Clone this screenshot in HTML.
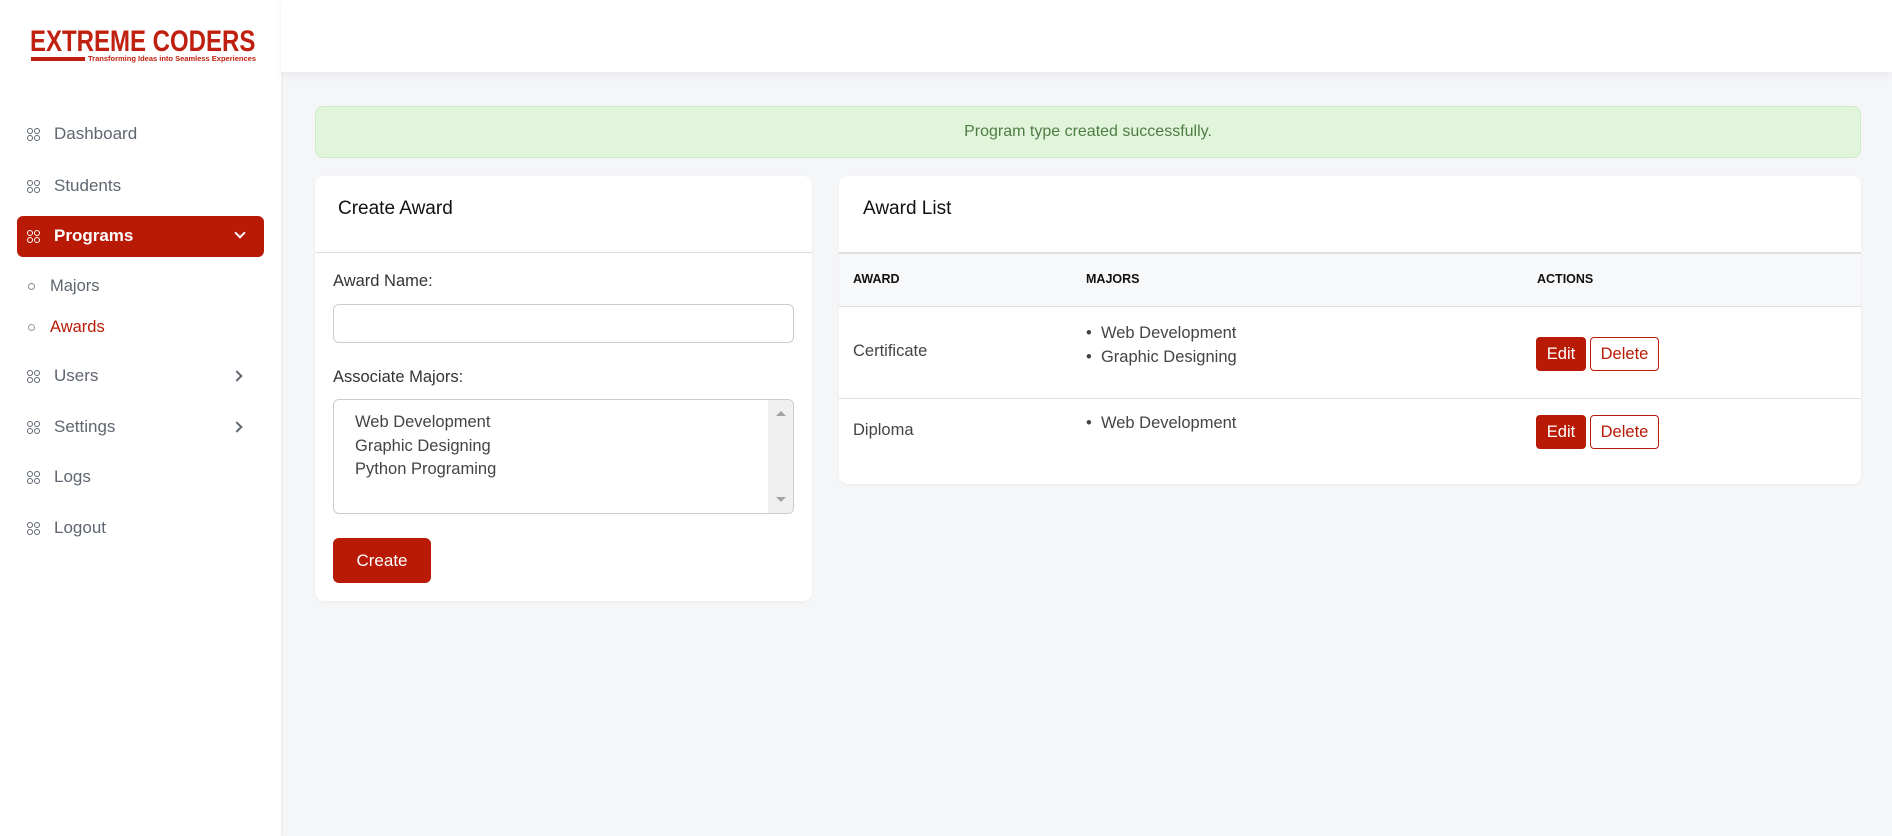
<!DOCTYPE html>
<html><head><meta charset="utf-8"><style>
*{box-sizing:border-box;margin:0;padding:0}
body{width:1892px;height:836px;overflow:hidden;background:#f5f6f8;font-family:"Liberation Sans",sans-serif;position:relative;color:#333}
.side{position:absolute;left:0;top:0;width:281px;height:836px;background:#fff;box-shadow:1px 0 3px rgba(0,0,0,.06)}
.top{position:absolute;left:281px;top:0;right:0;height:72px;background:#fff;box-shadow:0 3px 8px rgba(0,0,0,.06)}
.abs{position:absolute}
.nav{position:absolute;left:27px;font-size:17px;color:#5f6670;display:flex;align-items:center;height:24px}
.nav .ic{width:13px;height:13px;margin-right:14px;display:grid;grid-template-columns:1fr 1fr;gap:1px}
.nav .ic i{border:1.5px solid currentColor;border-radius:50%;width:6px;height:6px}
.chev{position:absolute;right:0;width:8px;height:8px;border-right:2px solid currentColor;border-bottom:2px solid currentColor}
.card{position:absolute;background:#fff;border-radius:9px;box-shadow:0 1px 3px rgba(0,0,0,.04)}
.lbl{position:absolute;font-size:16.5px;color:#333}
.btnr{position:absolute;background:#b81a05;color:#fff;border-radius:4px;display:flex;align-items:center;justify-content:center}
.btno{position:absolute;border:1px solid #b81a05;color:#b81a05;border-radius:4px;display:flex;align-items:center;justify-content:center;background:#fff}
.th{position:absolute;font-size:12.5px;font-weight:bold;color:#111}
.td{position:absolute;font-size:16.5px;color:#444}
</style></head><body>
<div class="side">
  <div class="abs" style="left:30px;top:27px;font-size:30px;font-weight:bold;color:#c0200f;line-height:30px;white-space:nowrap;transform:scaleX(0.8);transform-origin:left">EXTREME CODERS</div>
  <div class="abs" style="left:31px;top:57px;width:54px;height:4px;background:#c0200f"></div>
  <div class="abs" style="left:88px;top:54px;font-size:7.5px;font-weight:bold;color:#c0200f;white-space:nowrap;transform:scaleX(1.0);transform-origin:left">Transforming Ideas into Seamless Experiences</div>

  <div class="nav" style="top:122px"><span class="ic"><i></i><i></i><i></i><i></i></span>Dashboard</div>
  <div class="nav" style="top:174px"><span class="ic"><i></i><i></i><i></i><i></i></span>Students</div>
  <div class="abs" style="left:17px;top:216px;width:247px;height:41px;background:#b81a05;border-radius:6px"></div>
  <div class="nav" style="top:224px;color:#fff;font-weight:bold;width:220px"><span class="ic"><i></i><i></i><i></i><i></i></span>Programs<span class="chev" style="transform:rotate(45deg);top:5px;right:3px"></span></div>
  <div class="nav" style="top:274px;left:28px;font-size:16.5px"><span style="width:7px;height:7px;border:1.5px solid #888;border-radius:50%;margin-right:15px"></span>Majors</div>
  <div class="nav" style="top:315px;left:28px;font-size:16.5px;color:#b81a05"><span style="width:7px;height:7px;border:1.5px solid #999;border-radius:50%;margin-right:15px"></span>Awards</div>
  <div class="nav" style="top:364px;width:220px"><span class="ic"><i></i><i></i><i></i><i></i></span>Users<span class="chev" style="transform:rotate(-45deg);top:8px;right:6px"></span></div>
  <div class="nav" style="top:415px;width:220px"><span class="ic"><i></i><i></i><i></i><i></i></span>Settings<span class="chev" style="transform:rotate(-45deg);top:8px;right:6px"></span></div>
  <div class="nav" style="top:465px"><span class="ic"><i></i><i></i><i></i><i></i></span>Logs</div>
  <div class="nav" style="top:516px"><span class="ic"><i></i><i></i><i></i><i></i></span>Logout</div>
</div>
<div class="top"></div>

<div class="abs" style="left:315px;top:106px;width:1546px;height:52px;background:#e0f5da;border:1px solid #cfeac6;border-radius:8px;color:#4f7d45;font-size:16px;display:flex;align-items:center;justify-content:center">Program type created successfully.</div>

<div class="card" style="left:315px;top:176px;width:497px;height:425px">
  <div class="abs" style="left:23px;top:22px;font-size:19px;color:#111">Create Award</div>
  <div class="abs" style="left:0;top:76px;width:100%;height:1px;background:#dcdcdc"></div>
  <div class="lbl" style="left:18px;top:96px">Award Name:</div>
  <div class="abs" style="left:18px;top:128px;width:461px;height:39px;border:1px solid #ccc;border-radius:6px"></div>
  <div class="lbl" style="left:18px;top:192px">Associate Majors:</div>
  <div class="abs" style="left:18px;top:223px;width:461px;height:115px;border:1px solid #ccc;border-radius:6px;overflow:hidden">
    <div class="abs" style="left:21px;top:11px;font-size:16.5px;color:#444;line-height:23.5px">Web Development<br>Graphic Designing<br>Python Programing</div>
    <div class="abs" style="right:0;top:0;width:25px;height:100%;background:#f0f0f0"></div>
    <div class="abs" style="right:7px;top:11px;width:0;height:0;border-left:5px solid transparent;border-right:5px solid transparent;border-bottom:5px solid #a3a3a3"></div>
    <div class="abs" style="right:7px;bottom:11px;width:0;height:0;border-left:5px solid transparent;border-right:5px solid transparent;border-top:5px solid #a3a3a3"></div>
  </div>
  <div class="btnr" style="left:18px;top:362px;width:98px;height:45px;font-size:17px;border-radius:6px">Create</div>
</div>

<div class="card" style="left:839px;top:176px;width:1022px;height:308px;overflow:hidden">
  <div class="abs" style="left:24px;top:22px;font-size:19px;color:#111">Award List</div>
  <div class="abs" style="left:0;top:76px;width:100%;height:55px;background:#f7f8fa;border-top:2px solid #e0e0e0;border-bottom:1px solid #e0e0e0"></div>
  <div class="th" style="left:14px;top:96px">AWARD</div>
  <div class="th" style="left:247px;top:96px">MAJORS</div>
  <div class="th" style="left:698px;top:96px">ACTIONS</div>
  <div class="td" style="left:14px;top:166px">Certificate</div>
  <div class="td" style="left:247px;top:145px;line-height:24px">•&nbsp;&nbsp;Web Development<br>•&nbsp;&nbsp;Graphic Designing</div>
  <div class="btnr" style="left:697px;top:161px;width:50px;height:34px;font-size:16.5px">Edit</div>
  <div class="btno" style="left:751px;top:161px;width:69px;height:34px;font-size:16.5px">Delete</div>
  <div class="abs" style="left:0;top:222px;width:100%;height:1px;background:#e0e0e0"></div>
  <div class="td" style="left:14px;top:245px">Diploma</div>
  <div class="td" style="left:247px;top:238px">•&nbsp;&nbsp;Web Development</div>
  <div class="btnr" style="left:697px;top:239px;width:50px;height:34px;font-size:16.5px">Edit</div>
  <div class="btno" style="left:751px;top:239px;width:69px;height:34px;font-size:16.5px">Delete</div>
</div>
</body></html>
